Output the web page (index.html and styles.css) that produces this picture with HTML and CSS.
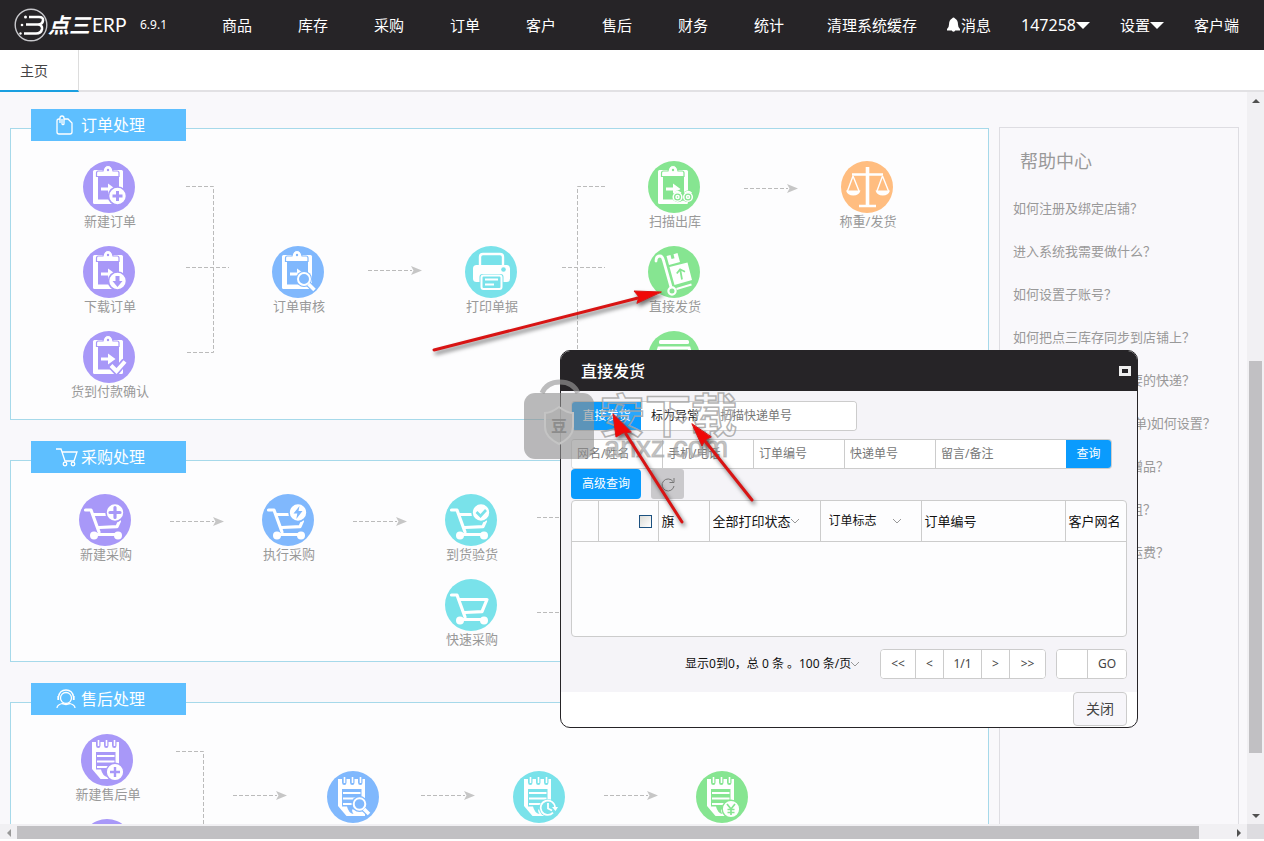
FILE: index.html
```html
<!DOCTYPE html>
<html lang="zh-CN">
<head>
<meta charset="utf-8">
<meta name="viewport" content="width=device-width, initial-scale=1">
<title>点三ERP</title>
<link rel="stylesheet" href="styles.css">
</head>
<body>
<svg class="sprite" aria-hidden="true">
  <defs>
    <symbol id="board" viewBox="0 0 52 52">
      <circle cx="26" cy="26" r="26" fill="currentColor"/>
      <rect x="10" y="9" width="30" height="34" rx="1.500" fill="#fff"/>
      <rect x="15" y="14" width="21" height="24.500" fill="currentColor"/>
      <path d="M13.500 15.500v-3.500q0-2 2-2h4.500q1-5.500 5-5.500t5 5.500h4q2 0 2 2v3.500z" fill="#fff" stroke="currentColor" stroke-width="1.200"/>
      <circle cx="25" cy="9" r="1.200" fill="currentColor"/>
      <path d="M18 26.500h7v-4l7.500 5.500-7.500 5.500v-4h-7z" fill="#fff"/>
    </symbol>
    <symbol id="cart-top" viewBox="0 0 52 52">
      <circle cx="26" cy="26" r="26" fill="currentColor"/>
      <path d="M6.500 16h5.500l8 22M15 20.500h14M20 33.500l18-.8 2.500-5.500M16 40.500h22" fill="none" stroke="#fff" stroke-width="3.200" stroke-linecap="round" stroke-linejoin="round"/>
      <circle cx="15" cy="41.500" r="4" fill="#fff"/><circle cx="39" cy="41.500" r="4" fill="#fff"/>
      <circle cx="36" cy="18.500" r="9" fill="#fff" stroke="currentColor" stroke-width="1.600"/>
    </symbol>
    <symbol id="cart" viewBox="0 0 52 52">
      <circle cx="26" cy="26" r="26" fill="currentColor"/>
      <path d="M6.500 16h5.500l8 22M15 20.500h27l-5 12.200-17 .8M16 40.500h22" fill="none" stroke="#fff" stroke-width="3.200" stroke-linecap="round" stroke-linejoin="round"/>
      <circle cx="15" cy="41.500" r="4" fill="#fff"/><circle cx="39" cy="41.500" r="4" fill="#fff"/>
    </symbol>
    <symbol id="note" viewBox="0 0 52 52">
      <circle cx="26" cy="26" r="26" fill="currentColor"/>
      <path d="M11 8h27v37H19.500L11 35z" fill="#fff"/>
      <path d="M15 18h19.500v20.500H25q0 3 1.500 4.500-5-1-6.500-7.500h-5z" fill="currentColor"/>
      <path d="M15 5h4.500v6.500q0 2.500-2.200 2.500T15 11.500zM23 5h4.500v6.500q0 2.500-2.200 2.500T23 11.500zM31 5h4.500v6.500q0 2.500-2.200 2.500T31 11.500z" fill="currentColor"/>
      <path d="M17.500 6v6M25.500 6v6M33.500 6v6" stroke="#fff" stroke-width="1.600"/>
      <path d="M16 22h17.500M16 27.500h17.500M16 33h12" stroke="#fff" stroke-width="2.200"/>
    </symbol>
    <symbol id="arrow" viewBox="0 0 54 10">
      <path d="M0 5h44" stroke="#bbb" stroke-dasharray="4 2"/>
      <path d="M43 .5 54 5 43 9.500 45.500 5z" fill="#c6c6c6"/>
    </symbol>
    <symbol id="chevron" viewBox="0 0 10 6"><path d="M1 1l4 4 4-4" fill="none" stroke="#999"/></symbol>
  </defs>
</svg>

<header class="topbar">
  <div class="logo">
    <svg width="34" height="34" viewBox="0 0 34 34" fill="none" stroke="#fff" aria-hidden="true">
      <circle cx="17" cy="17" r="15.800" stroke="#c8c8cc" stroke-width="1.400"/>
      <path d="M15 9h10q4.500 0 4 3.500-.5 4-5 4H12M24 16.500q4.500.5 4 4.500-.8 4.500-6 4.500H10" stroke-width="2.600"/>
      <circle cx="11.500" cy="9" r="1.500" fill="#fff" stroke="none"/><circle cx="8" cy="17" r="1.300" fill="#fff" stroke="none"/><circle cx="6.500" cy="25.500" r="1.200" fill="#fff" stroke="none"/>
    </svg>
    <span class="logo-cn">点三</span><span class="logo-en">ERP</span>
  </div>
  <span class="version">6.9.1</span>
  <nav class="menu">
    <a href="#">商品</a><a href="#">库存</a><a href="#">采购</a><a href="#">订单</a><a href="#">客户</a><a href="#">售后</a><a href="#">财务</a><a href="#">统计</a>
  </nav>
  <nav class="tools">
    <a href="#">清理系统缓存</a>
    <a href="#"><svg width="13" height="16" viewBox="0 0 13 16" aria-hidden="true"><path d="M5 1.500Q6.500-.5 8 1.500q3 1.500 3 6 0 3 2 4.500v1.500H0v-1.500q2-1.500 2-4.500 0-4.500 3-6zM4.500 13h4q-.5 1.800-2 1.800t-2-1.800z" fill="#fff"/></svg>消息</a>
    <a class="account" href="#">147258<i class="caret"></i></a>
    <a href="#">设置<i class="caret"></i></a>
    <a href="#">客户端</a>
  </nav>
</header>

<div class="tabs"><a class="tab" href="#">主页</a></div>

<div class="viewport">
  <main class="content">
    <div class="flows">
      <section class="panel panel-orders">
        <h2 class="tag"><svg width="17" height="20" viewBox="0 0 17 20" fill="none" stroke="#fff" stroke-width="1.300" aria-hidden="true"><path d="M4 4H3Q1 4 1 6v11q0 2 2 2h11q2 0 2-2V8l-4-4H8.500M4 8V3q0-2 2-2t2 2v5.500q0 1.200-1 1.200t-1-1.200V4"/></svg><span>订单处理</span></h2>
        <svg class="wires" width="978" height="290" viewBox="11 129 978 290" aria-hidden="true">
          <path d="M186 186.500h27.500v166H186M186 267.500h43M605 186.500h-27.500V419M562 267.500h43" fill="none" stroke="#bbb" stroke-dasharray="4 2"/>
          <use href="#arrow" x="368" y="265.500" width="54" height="10"/><use href="#arrow" x="744" y="183.500" width="54" height="10"/>
        </svg>
        <a class="node col-a row-1 purple" href="#"><svg class="disc" viewBox="0 0 52 52"><use href="#board"/><circle cx="34.500" cy="35" r="9" fill="#fff" stroke="currentColor" stroke-width="1.600"/><path d="M34.500 30v10M29.500 35h10" stroke="currentColor" stroke-width="3"/></svg><span>新建订单</span></a>
        <a class="node col-a row-2 purple" href="#"><svg class="disc" viewBox="0 0 52 52"><use href="#board"/><circle cx="34.500" cy="35" r="9" fill="#fff" stroke="currentColor" stroke-width="1.600"/><path d="M32.500 30h4v5h3l-5 6-5-6h3z" fill="currentColor"/></svg><span>下载订单</span></a>
        <a class="node col-a row-3 purple" href="#"><svg class="disc" viewBox="0 0 52 52"><use href="#board"/><path d="M27.500 34l6 6.500L42 30" fill="none" stroke="currentColor" stroke-width="7"/><path d="M28 34.500l5.500 5.500L42 30.500" fill="none" stroke="#fff" stroke-width="4"/></svg><span>货到付款确认</span></a>
        <a class="node col-b row-2 blue" href="#"><svg class="disc" viewBox="0 0 52 52"><use href="#board"/><circle cx="32" cy="33" r="8" fill="currentColor"/><circle cx="32" cy="33" r="6" fill="currentColor" stroke="#fff" stroke-width="2"/><path d="M36.500 38l6 6" stroke="currentColor" stroke-width="6"/><path d="M36.500 38l6 6" stroke="#fff" stroke-width="3.500"/></svg><span>订单审核</span></a>
        <a class="node col-c row-2 cyan" href="#"><svg class="disc" viewBox="0 0 52 52"><circle cx="26" cy="26" r="26" fill="currentColor"/><path d="M15 19v-8q0-3 3-3h17q3 0 3 3v8" fill="none" stroke="#fff" stroke-width="2.400"/><rect x="8" y="19" width="37" height="17" rx="3.500" fill="#fff"/><circle cx="38.500" cy="23.500" r="2.300" fill="currentColor"/><rect x="14.500" y="28" width="24" height="16.500" rx="3" fill="currentColor"/><rect x="16.500" y="29.500" width="20" height="13.500" rx="2" fill="none" stroke="#fff" stroke-width="2"/><path d="M20 33.500h13M20 38.500h9" stroke="#fff" stroke-width="2"/></svg><span>打印单据</span></a>
        <a class="node col-d row-1 green" href="#"><svg class="disc" viewBox="0 0 52 52"><use href="#board"/><path d="M25 33q2-4 6-3.500l4 2 4-2q4-.5 6 3.500v6q-4 4-10 .5-6 3.500-10-.5z" fill="currentColor"/><g fill="none" stroke="#fff" stroke-width="1.500"><circle cx="29.500" cy="36" r="4.300"/><circle cx="40" cy="36" r="4.300"/><path d="M26 32q3-3 7 0M36.500 32q4-3 7 0"/><circle cx="29.500" cy="36" r="1.500"/><circle cx="40" cy="36" r="1.500"/></g></svg><span>扫描出库</span></a>
        <a class="node col-d row-2 green" href="#"><svg class="disc" viewBox="0 0 52 52"><circle cx="26" cy="26" r="26" fill="currentColor"/><path d="M8 15q0-5 4-5 2.500 0 3.500 4.500L23 41" fill="none" stroke="#fff" stroke-width="2.800" stroke-linecap="round"/><circle cx="24" cy="45" r="3.600" fill="none" stroke="#fff" stroke-width="2.200"/><path d="M18.500 10l4-1 1 4 3-.8-1-4L29.500 7l2.500 9-11 3zM21.500 21l18-4.500L44 34l-17.500 5z" fill="#fff"/><path d="M28.500 43L43.500 38.500" stroke="#fff" stroke-width="2"/><path d="M34 33.500L32.300 24M28.800 27.500l3.300-4.200 4.900 2.500" fill="none" stroke="currentColor" stroke-width="1.800"/></svg><span>直接发货</span></a>
        <a class="node col-d row-3 green" href="#" aria-hidden="true"><svg class="disc" viewBox="0 0 52 52"><circle cx="26" cy="26" r="26" fill="currentColor"/><rect x="11" y="9" width="30" height="4" rx="1.500" fill="#fff"/><path d="M11 17h30l3 10H8z" fill="none" stroke="#fff" stroke-width="3"/></svg></a>
        <a class="node col-e row-1 orange" href="#"><svg class="disc" viewBox="0 0 52 52"><circle cx="26" cy="26" r="26" fill="currentColor"/><path d="M26.500 6v39" stroke="#fff" stroke-width="3.600"/><path d="M11 13.500h31M18 45h17" stroke="#fff" stroke-width="2.600"/><path d="M12 15L6.500 30M12 15l6 15M41.500 15L36 30M41.500 15l6 15" fill="none" stroke="#fff" stroke-width="1.400"/><path d="M5 29.500h14.500q-1.500 5-7.200 5T5 29.500zM34.500 29.500H49q-1.500 5-7.200 5t-7.300-5z" fill="#fff"/></svg><span>称重/发货</span></a>
      </section>

      <section class="panel panel-buying">
        <h2 class="tag"><svg width="22" height="19" viewBox="0 0 22 19" fill="none" stroke="#fff" stroke-width="1.300" aria-hidden="true"><path d="M0 1h5l4 12h9l3-9H6"/><circle cx="9" cy="16" r="1.800"/><circle cx="17" cy="16" r="1.800"/></svg><span>采购处理</span></h2>
        <svg class="wires" width="978" height="200" viewBox="11 461 978 200" aria-hidden="true">
          <path d="M537 517.500h40M537 612.500h40" stroke="#bbb" stroke-dasharray="4 2"/>
          <use href="#arrow" x="170" y="516.500" width="54" height="10"/><use href="#arrow" x="353" y="516.500" width="54" height="10"/>
        </svg>
        <a class="node buy-a buy-1 purple" href="#"><svg class="disc" viewBox="0 0 52 52"><use href="#cart-top"/><path d="M36 13.500v10M31 18.500h10" stroke="currentColor" stroke-width="3.200" stroke-linecap="round"/></svg><span>新建采购</span></a>
        <a class="node buy-b buy-1 blue" href="#"><svg class="disc" viewBox="0 0 52 52"><use href="#cart-top"/><path d="M37.500 12l-6 7.500h3.800l-1 5.500 6.200-8h-4z" fill="currentColor"/></svg><span>执行采购</span></a>
        <a class="node buy-c buy-1 cyan" href="#"><svg class="disc" viewBox="0 0 52 52"><use href="#cart-top"/><path d="M31.500 18l4 4 5.500-6" fill="none" stroke="currentColor" stroke-width="2.600"/></svg><span>到货验货</span></a>
        <a class="node buy-c buy-2 cyan" href="#"><svg class="disc" viewBox="0 0 52 52"><use href="#cart"/></svg><span>快速采购</span></a>
      </section>

      <section class="panel panel-service">
        <h2 class="tag"><svg width="20" height="20" viewBox="0 0 20 20" fill="none" stroke="#fff" stroke-width="1.300" aria-hidden="true"><circle cx="10" cy="9" r="5.500"/><path d="M2.500 11V8q1-7 7.500-7t7.500 7v3M2 7v4M18 7v4M1 19q0-3 5-4.500M19 19q0-3-5-4.500M6 14.500l4 1 4-1"/></svg><span>售后处理</span></h2>
        <svg class="wires" width="978" height="200" viewBox="11 703 978 200" aria-hidden="true">
          <path d="M176 751.500h27.500V900" fill="none" stroke="#bbb" stroke-dasharray="4 2"/>
          <use href="#arrow" x="233" y="790.500" width="54" height="10"/><use href="#arrow" x="421" y="790.500" width="54" height="10"/><use href="#arrow" x="604" y="790.500" width="54" height="10"/>
        </svg>
        <a class="node svc-a svc-top purple" href="#"><svg class="disc" viewBox="0 0 52 52"><use href="#note"/><circle cx="34" cy="38" r="8.800" fill="#fff" stroke="currentColor" stroke-width="1.400"/><path d="M34 33v10M29 38h10" stroke="currentColor" stroke-width="2.400"/></svg><span>新建售后单</span></a>
        <a class="node svc-a svc-low purple" href="#" aria-hidden="true"><svg class="disc" viewBox="0 0 52 52"><use href="#note"/></svg></a>
        <a class="node svc-b svc-mid blue" href="#" aria-label="售后审核"><svg class="disc" viewBox="0 0 52 52"><use href="#note"/><circle cx="32.500" cy="33" r="8" fill="currentColor"/><circle cx="32.500" cy="33" r="5.800" fill="currentColor" stroke="#fff" stroke-width="2"/><path d="M37 38l5 5" stroke="currentColor" stroke-width="6"/><path d="M37 38l5 5" stroke="#fff" stroke-width="3.600"/></svg></a>
        <a class="node svc-c svc-mid cyan" href="#" aria-label="售后等待"><svg class="disc" viewBox="0 0 52 52"><use href="#note"/><circle cx="35" cy="37" r="9" fill="currentColor"/><path d="M42 36.500a7.200 7.200 0 1 0-2 5.200M35 32v5.500l4 2" fill="none" stroke="#fff" stroke-width="1.800"/><path d="M39 36h6l-2.500 4z" fill="#fff"/></svg></a>
        <a class="node svc-d svc-mid green" href="#" aria-label="售后退款"><svg class="disc" viewBox="0 0 52 52"><use href="#note"/><circle cx="35" cy="38" r="8.800" fill="#fff" stroke="currentColor" stroke-width="1.400"/><path d="M31 33l4 5 4-5M35 38v6M31.500 38.500h7M31.500 41.500h7" fill="none" stroke="currentColor" stroke-width="1.700"/></svg></a>
      </section>
    </div>

    <aside class="help">
      <h2>帮助中心</h2>
      <ul>
        <li><a href="#">如何注册及绑定店铺？</a></li>
        <li><a href="#">进入系统我需要做什么？</a></li>
        <li><a href="#">如何设置子账号？</a></li>
        <li><a href="#">如何把点三库存同步到店铺上？</a></li>
        <li><a href="#">如何设置我店铺所需要的快递？</a></li>
        <li><a href="#">快递模板(快递单发货单)如何设置？</a></li>
        <li><a href="#">如何设置订单自动送赠品？</a></li>
        <li><a href="#">如何给商品设置分类组？</a></li>
        <li><a href="#">如何设置快递公司的运费？</a></li>
      </ul>
    </aside>
  </main>
  <div class="vbar" aria-hidden="true"><i class="step"><i class="up"></i></i><i class="vgap-top"></i><i class="vthumb"></i><i class="vgap-bottom"></i><i class="step"><i class="down"></i></i></div>
</div>
<div class="hbar" aria-hidden="true"><i class="step"><i class="left"></i></i><i class="hthumb"></i><i class="hgap"></i><i class="step"><i class="right"></i></i><i class="corner"></i></div>

<section class="dialog" role="dialog" aria-labelledby="dialog-title">
  <header class="dialog-head">
    <h1 id="dialog-title">直接发货</h1>
    <button class="restore" type="button" aria-label="还原"></button>
  </header>
  <div class="dialog-body">
    <div class="group scan">
      <button class="btn-blue" type="button">直接发货</button>
      <button class="btn-plain" type="button">标为异常</button>
      <input type="text" placeholder="扫描快递单号" aria-label="扫描快递单号">
    </div>
    <div class="group search">
      <input type="text" placeholder="网名/姓名" aria-label="网名/姓名">
      <input type="text" placeholder="手机/电话" aria-label="手机/电话">
      <input type="text" placeholder="订单编号" aria-label="订单编号">
      <input type="text" placeholder="快递单号" aria-label="快递单号">
      <input class="memo" type="text" placeholder="留言/备注" aria-label="留言/备注">
      <button class="btn-blue" type="button">查询</button>
    </div>
    <div class="more">
      <button class="btn-blue" type="button">高级查询</button>
      <button class="reload" type="button" aria-label="刷新"><svg width="16" height="16" viewBox="0 0 16 16" fill="none" stroke="#777" aria-hidden="true"><path d="M13 5.500A6 6 0 1 0 14 10M14 2v4.500H9.500"/></svg></button>
    </div>
    <div class="grid">
      <table>
        <thead>
          <tr>
            <th class="c-no"></th>
            <th class="c-check"><input type="checkbox" aria-label="全选"></th>
            <th class="c-flag">旗</th>
            <th class="c-print"><span class="pick"><select aria-label="打印状态"><option>全部打印状态</option></select><svg width="10" height="6"><use href="#chevron"/></svg></span></th>
            <th class="c-mark"><span class="pick"><select aria-label="订单标志"><option>订单标志</option></select><svg width="10" height="6"><use href="#chevron"/></svg></span></th>
            <th class="c-order">订单编号</th>
            <th>客户网名</th>
          </tr>
        </thead>
      </table>
    </div>
    <div class="pager">
      <span>显示0到0，总 0 条 。</span>
      <span class="pick size"><select aria-label="每页条数"><option>100 条/页</option></select><svg width="10" height="6"><use href="#chevron"/></svg></span>
      <div class="group pages"><button type="button" class="wide">&lt;&lt;</button><button type="button">&lt;</button><span class="now">1/1</span><button type="button">&gt;</button><button type="button" class="wide">&gt;&gt;</button></div>
      <div class="group jump"><input type="text" aria-label="页码"><button type="button">GO</button></div>
    </div>
  </div>
  <footer class="dialog-foot"><button type="button">关闭</button></footer>
</section>

<svg class="marks" width="1264" height="841" viewBox="0 0 1264 841" aria-hidden="true">
  <g class="stamp">
    <path d="M542 393q5-11 18-11t18 11" fill="none" stroke="#999" stroke-opacity=".65" stroke-width="5"/>
    <rect x="524" y="393" width="70" height="66" rx="11" fill="#8f8f8f" fill-opacity=".62"/>
    <path d="M559 407q8 6 14 6v14q0 10-14 17-14-7-14-17v-14q6 0 14-6z" fill="#b0b0b0" fill-opacity=".8" stroke="#c4c4c4" stroke-width="2"/>
    <text class="bean" x="551" y="432">豆</text>
    <text class="stamp-cn" x="599" y="432">安下载</text>
    <text class="stamp-en" x="604" y="457">anxz.com</text>
  </g>
  <g class="pointers">
    <path d="M434 350L640 297.500"/><path class="tip" d="M661 292l-27-1 5 6-2 6z"/>
    <path d="M682 522L626 434"/><path class="tip" d="M613 414l3 23 7-4 8-1z"/>
    <path d="M752 500L705 441"/><path class="tip" d="M692 424l10 22 3-6 6-3z"/>
  </g>
</svg>
</body>
</html>
```
FILE: styles.css
```css
* { box-sizing: border-box; }

body {
  margin: 0;
  height: 100vh;
  display: flex;
  flex-direction: column;
  position: relative;
  overflow: hidden;
  padding-bottom: 2px;
  background: #fff;
  color: #222;
  font: 13px/16px "Noto Sans", "Noto Sans CJK SC", sans-serif;
}

a { color: inherit; text-decoration: none; }
h1, h2, ul { margin: 0; padding: 0; font-weight: 400; list-style: none; }
button, input, select { font: inherit; margin: 0; padding: 0; border: 0; border-radius: 0; outline: 0; }
.sprite { position: absolute; width: 0; height: 0; }

/* top bar */
.topbar {
  flex: none;
  display: flex;
  align-items: center;
  height: 50px;
  padding: 0 25px 0 14px;
  background: #262427;
  color: #fff;
  font-size: 15px;
  line-height: 20px;
  white-space: nowrap;
}
.logo { display: flex; align-items: center; width: 126px; }
.logo-cn { font-size: 21px; font-weight: 700; font-style: italic; }
.logo-en { font: 19px/20px Lato, sans-serif; padding-left: 2px; }
.version { width: 82px; font-size: 12px; }
.menu { display: flex; gap: 46px; }
.tools { display: flex; gap: 30px; margin-left: auto; }
.tools a { display: flex; align-items: center; }
.tools svg { margin-right: 1px; }
.tools .account { font-size: 16px; }
.caret { border: 7px solid transparent; border-top-color: #fff; border-bottom: 0; }

.tabs { flex: none; display: flex; height: 42px; border-bottom: 2px solid #e2e1e4; }
.tab {
  width: 79px;
  height: 42px;
  padding: 13px 0 0 20px;
  border-right: 1px solid #ddd;
  border-bottom: 2px solid #1a9fe0;
  color: #444;
  font-size: 14px;
}

/* work area */
.viewport { flex: 1; display: flex; min-height: 0; background: #f9f8fb; }
.content { flex: 1; display: flex; gap: 10px; min-width: 0; padding: 36px 8px 0 10px; overflow: hidden; }
.flows { flex: 1; display: flex; flex-direction: column; gap: 40px; }
.panel { flex: none; position: relative; background: #fdfdfe; border: 1px solid #a6d9ea; }
.panel-orders { min-height: 292px; }
.panel-buying { min-height: 202px; }
.panel-service { min-height: 202px; }
.tag {
  position: absolute;
  left: 20px;
  top: -20px;
  z-index: 1;
  display: flex;
  align-items: center;
  width: 155px;
  height: 32px;
  padding-left: 25px;
  background: #5ebfff;
  color: #fff;
  font-size: 16px;
}
.tag svg { flex: none; }
.tag span { margin-left: auto; padding-right: 41px; }
.wires { position: absolute; left: 0; top: 0; }

.node {
  position: absolute;
  display: flex;
  flex-direction: column;
  align-items: center;
  width: 120px;
}
.node span { color: #999; padding-left: 2px; }
.disc { width: 52px; height: 52px; }
.purple { color: #a898f8; }
.blue { color: #80b8fd; }
.cyan { color: #79e2ea; }
.green { color: #86e591; }
.orange { color: #ffbd80; }

.row-1 { top: 32px; }
.row-2 { top: 117px; }
.row-3 { top: 202px; }
.col-a { left: 38px; }
.col-b { left: 227px; }
.col-c { left: 420px; }
.col-d { left: 603px; }
.col-e { left: 796px; }
.buy-1 { top: 33px; }
.buy-2 { top: 118px; }
.buy-a { left: 34px; }
.buy-b { left: 217px; }
.buy-c { left: 400px; }
.svc-top { top: 31px; }
.svc-mid { top: 68px; }
.svc-low { top: 116px; }
.svc-a { left: 36px; }
.svc-b { left: 282px; }
.svc-c { left: 468px; }
.svc-d { left: 651px; }

.help { flex: none; width: 240px; height: 720px; margin-top: -1px; padding: 22px 0 0 13px; border: 1px solid #dedde2; color: #999; white-space: nowrap; }
.help h2 { padding: 0 0 28px 7px; font-size: 18px; line-height: 22px; }
.help ul { display: grid; gap: 27px; }

/* scroll bars */
.vbar, .hbar { display: flex; background: #f1f0f3; }
.vbar { flex: none; width: 17px; flex-direction: column; align-items: stretch; }
.hbar { flex: none; height: 15px; }
.step { flex: none; width: 17px; height: 17px; display: flex; align-items: center; justify-content: center; }
.up, .down, .left, .right { border: 4px solid transparent; }
.up { border-bottom-color: #505050; border-top: 0; }
.down { border-top-color: #505050; border-bottom: 0; }
.left { border-right-color: #999; border-left: 0; }
.right { border-left-color: #505050; border-right: 0; }
.vgap-top { flex: 252; }
.vthumb { flex: 392; margin: 0 2px; background: #c1c0c3; }
.vgap-bottom { flex: 54; }
.hthumb { flex: 1182; margin-top: 2px; background: #c1c0c3; }
.hgap { flex: 31; }
.corner { width: 17px; background: #dddce0; }

/* dialog */
.dialog {
  position: absolute;
  left: 560px;
  top: 350px;
  z-index: 2;
  width: 578px;
  border: 1px solid #262427;
  border-radius: 10px;
  background: #fff;
  overflow: hidden;
  font-size: 12px;
}
.dialog-head { display: flex; align-items: center; justify-content: space-between; height: 40px; padding: 0 6px 0 20px; background: #262427; color: #fff; }
.dialog-head h1 { font-size: 16px; font-weight: 500; line-height: 20px; }
.restore { width: 12px; height: 10px; border: 3px solid #eee; background: #262427; }
.dialog-body { padding: 10px 10px 13px; background: #f5f4f8; }
.dialog button { color: #444; }
.dialog .btn-blue { background: #0a9bfd; color: #fff; }
.group { display: flex; height: 30px; border: 1px solid #ccc; border-radius: 4px; background: #fff; overflow: hidden; }
.group input { min-width: 0; background: #fff; }
.group input::placeholder { color: #777; opacity: 1; }
.scan { width: 286px; margin-bottom: 8px; }
.scan .btn-blue { width: 69px; }
.scan .btn-plain { width: 68px; background: #fff; color: #222; }
.scan input { flex: 1; padding-left: 11px; }
.search { width: 541px; }
.search input { width: 91px; padding-left: 5px; border-right: 1px solid #ccc; }
.search .memo { flex: 1; border-right: 0; }
.search .btn-blue { width: 45px; }
.search, .scan { border-left-color: #ddd; }
.more { display: flex; gap: 10px; height: 30px; margin-bottom: 1px; }
.more .btn-blue { width: 70px; border-radius: 4px; }
.reload { display: flex; align-items: center; justify-content: center; width: 33px; border-radius: 3px; background: #cac9cc; }

.grid { height: 137px; border: 1px solid #ccc; border-radius: 4px; background: #fdfdfe; overflow: hidden; }
.grid table { width: 100%; table-layout: fixed; border-collapse: collapse; color: #111; }
.grid th { height: 40px; padding: 0 3px; border-right: 1px solid #ccc; border-bottom: 1px solid #ccc; font-size: 13px; font-weight: 400; text-align: left; white-space: nowrap; }
.grid th:last-child { border-right: 0; }
.c-no { width: 26px; }
.c-check { width: 60px; }
.c-flag { width: 51px; }
.c-print { width: 111px; }
.c-mark { width: 101px; }
.c-order { width: 144px; }
.c-check input { display: block; appearance: none; width: 13px; height: 13px; margin: 2px 3px 0 auto; border: 1px solid #1c5180; background: linear-gradient(135deg, #dcdcd7, #fff); }
.pick { display: flex; align-items: center; }
.pick select { appearance: none; background: transparent; color: #111; }
.pick svg { flex: none; }
.c-print svg { margin-left: -2px; }
.grid .c-mark { padding-left: 8px; font-size: 12px; }
.c-mark svg { margin-left: 14px; }

.pager { display: flex; align-items: center; justify-content: flex-end; margin-top: 12px; color: #111; white-space: nowrap; }
.size svg { margin-left: -2px; }
.pages { margin: 0 10px 0 20px; }
.pages > * { width: 28px; background: #fff; border-right: 1px solid #ccc; }
.pages .wide { width: 35px; }
.pages .now { width: 38px; line-height: 28px; text-align: center; color: #444; }
.pages > :last-child { border-right: 0; }
.jump input { width: 31px; border-right: 1px solid #ccc; }
.jump button { width: 38px; background: #fff; }

.dialog-foot { display: flex; justify-content: flex-end; padding: 0 10px 1px; }
.dialog-foot button { width: 54px; height: 34px; border: 1px solid #ccc; border-radius: 4px; background: #f7f6fa; font-size: 14px; }

/* annotations over the page */
.marks { position: absolute; left: 0; top: 0; z-index: 3; pointer-events: none; }
.bean { font-size: 16px; font-weight: 700; fill: #8c8c8c; }
.stamp-cn { font-size: 46px; font-weight: 700; fill: #fff; fill-opacity: .15; stroke: #a5a5a5; stroke-width: 1.5px; stroke-opacity: .85; }
.stamp-en { font: 29px "Liberation Sans", sans-serif; fill: #aaa; fill-opacity: .7; stroke: #aaa; stroke-opacity: .6; stroke-width: 1px; }
.pointers { filter: drop-shadow(2px 3px 2px rgba(0, 0, 0, .55)); }
.pointers path { fill: none; stroke: #d81414; stroke-width: 3px; stroke-linecap: round; }
.pointers .tip { fill: #f00808; stroke: #d81414; stroke-width: 1px; }
```
